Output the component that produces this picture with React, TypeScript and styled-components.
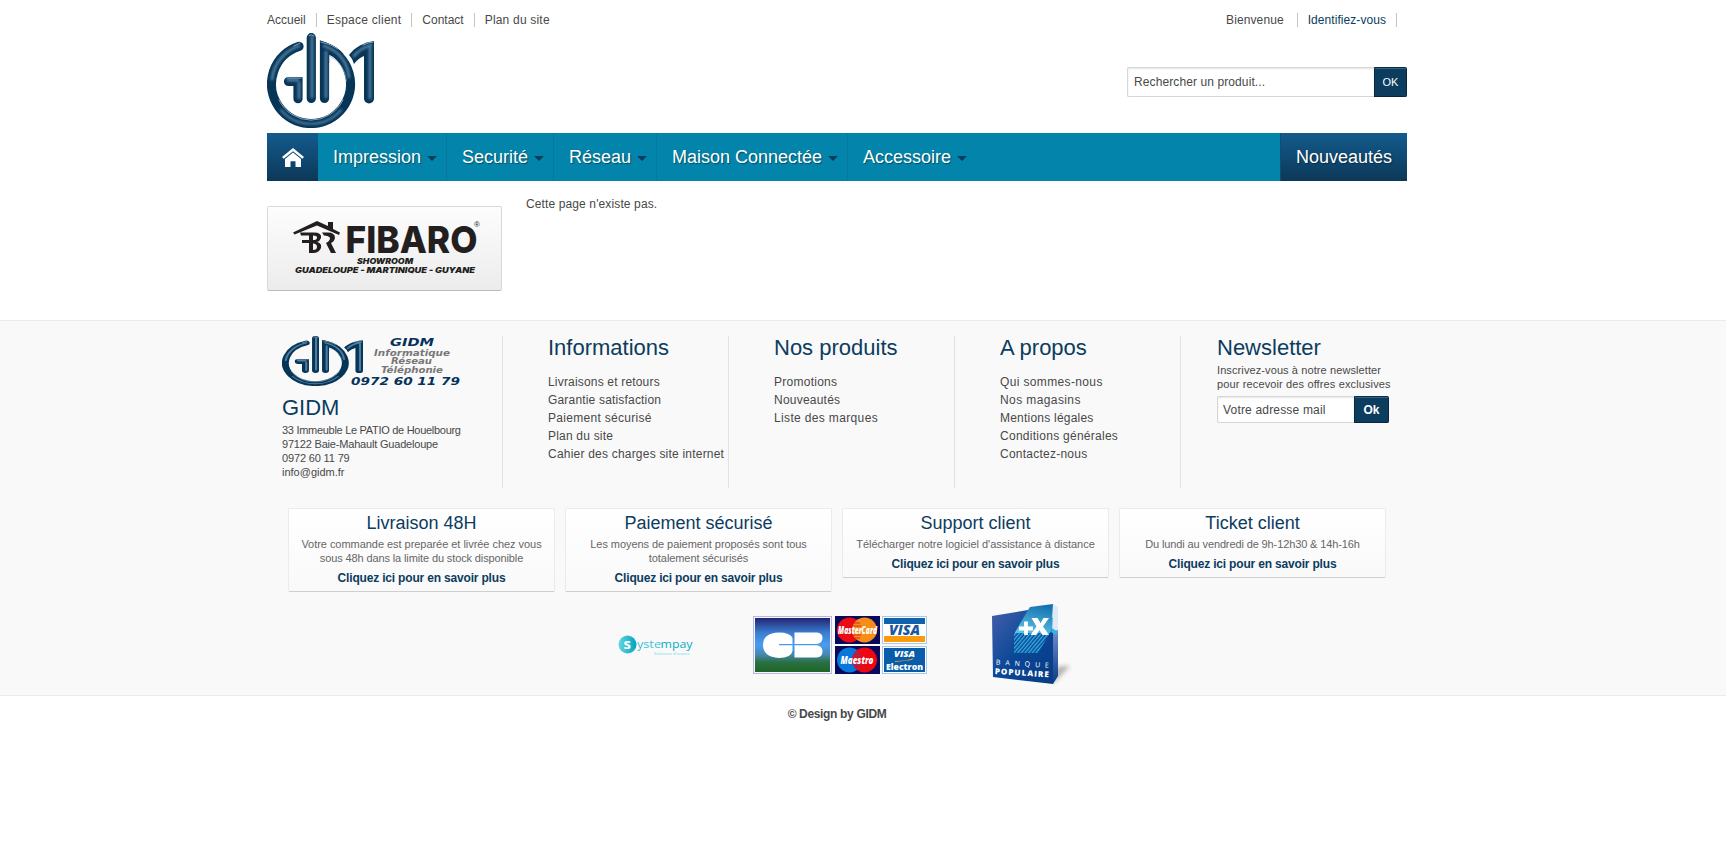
import React from "react";
import styled, { createGlobalStyle } from "styled-components";

const navy = "#0c3c5e";

const GlobalStyle = createGlobalStyle`
  * { box-sizing: border-box; }
  body {
    margin: 0;
    background: #fff;
    color: #484848;
    font: 12px/18px "Liberation Sans", Arial, sans-serif;
  }
  a { color: inherit; text-decoration: none; }
  ul, p, h2, h3 { margin: 0; padding: 0; list-style: none; font-weight: normal; }
  svg { display: block; }
`;

const Container = styled.div`
  width: 1140px;
  margin-left: 267px;
`;

const TopBar = styled.div`
  display: flex;
  justify-content: space-between;
  height: 33px;
  padding-top: 13px;
`;

const LinkStrip = styled.div`
  display: flex;
  align-items: flex-start;
`;

const StripLink = styled.a<{ $first?: boolean; $last?: boolean; $accent?: boolean; $gap?: number; $track?: number }>`
  height: 14px;
  line-height: 14px;
  padding-left: ${(p) => (p.$first ? 0 : 10)}px;
  padding-right: ${(p) => p.$gap ?? 10}px;
  border-right: ${(p) => (p.$last ? "0" : "1px solid #c4c4c4")};
  color: ${(p) => (p.$accent ? navy : "inherit")};
  letter-spacing: ${(p) => p.$track ?? 0}px;
`;

const AccountStrip = styled(LinkStrip)`
  padding-right: 10px;
`;

const Masthead = styled.header`
  display: flex;
  justify-content: space-between;
  height: 100px;
`;

const SearchForm = styled.form`
  display: flex;
  height: 30px;
  margin-top: 34px;
`;

const Field = styled.input<{ $width: number; $indent: number; $track: number }>`
  width: ${(p) => p.$width}px;
  padding: 0 0 0 ${(p) => p.$indent}px;
  border: 1px solid #d6d6d6;
  border-right: 0;
  border-radius: 2px 0 0 2px;
  background: #fff;
  box-shadow: inset 0 1px 2px #e6e6e6;
  font: 12px "Liberation Sans", Arial, sans-serif;
  letter-spacing: ${(p) => p.$track}px;
  &::placeholder { color: #484848; opacity: 1; }
`;

const SubmitButton = styled.button<{ $width: number; $bold?: boolean }>`
  width: ${(p) => p.$width}px;
  padding: 0;
  border: 1px solid #07273e;
  border-top-color: #0a2c45;
  border-radius: 0 2px 2px 0;
  background: ${navy};
  box-shadow: inset 0 1px 0 #3a627e;
  color: #fff;
  font: ${(p) => (p.$bold ? "bold 12px" : "11px")} "Liberation Sans", Arial, sans-serif;
`;

const MainNav = styled.nav`
  display: flex;
  height: 48px;
  background: #0384ab;
  color: #fff;
  font-size: 18px;
  line-height: 48px;
  text-shadow: 1px 1px 1px rgba(0, 0, 0, 0.4);
`;

const HomeLink = styled.a`
  display: flex;
  justify-content: center;
  width: 51px;
  padding: 15px 0 0 1px;
  background: linear-gradient(#135b8d, #0c3858);
`;

const NavItem = styled.a<{ $width: number; $last?: boolean }>`
  display: flex;
  align-items: center;
  width: ${(p) => p.$width}px;
  padding-left: 15px;
  border-right: ${(p) => (p.$last ? "0" : "1px solid #04799d")};
  &::after {
    content: "";
    margin: 2px 0 0 6px;
    border: 5px solid transparent;
    border-bottom: 0;
    border-top-color: ${navy};
  }
`;

const NewsLink = styled.a`
  width: 127px;
  margin-left: auto;
  text-align: center;
  background: linear-gradient(#135b8d, #0c3858);
  border-left: 1px solid #0b4f78;
`;

const Content = styled.main`
  display: flex;
  height: 139px;
`;

const ShowroomCard = styled.aside`
  width: 235px;
  height: 85px;
  margin: 25px 24px 0 0;
  border: 1px solid #d8d8d8;
  border-bottom-color: #bbb;
  border-radius: 2px;
  background: linear-gradient(#fdfdfd, #ececec);
`;

const Message = styled.p`
  padding-top: 14px;
  letter-spacing: 0.12px;
`;

const Footer = styled.footer`
  height: 376px;
  background: #f9f9f9;
  border-top: 1px solid #ebebeb;
  border-bottom: 1px solid #ebebeb;
`;

const FooterColumns = styled.div`
  display: flex;
  padding-top: 15px;
`;

const FooterColumn = styled.section<{ $width: number; $indent: number; $last?: boolean }>`
  width: ${(p) => p.$width}px;
  height: 152px;
  padding-left: ${(p) => p.$indent}px;
  border-right: ${(p) => (p.$last ? "0" : "1px solid #e2e2e2")};
  white-space: nowrap;
`;

const ColumnTitle = styled.h2`
  color: ${navy};
  font-size: 22px;
  line-height: 24px;
`;

const LinkList = styled.ul`
  padding-top: 13px;
`;

const LinkListItem = styled.li<{ $track: number }>`
  letter-spacing: ${(p) => p.$track}px;
`;

const SmallText = styled.p<{ $track?: number }>`
  font-size: 11px;
  line-height: 14px;
  letter-spacing: ${(p) => p.$track ?? 0}px;
`;

const TextGroup = styled.div`
  padding-top: 3px;
`;

const CompanyTitle = styled(ColumnTitle)`
  padding-top: 9px;
`;

const NewsletterForm = styled.form`
  display: flex;
  height: 27px;
  margin-top: 5px;
`;

const Services = styled.div`
  display: flex;
  align-items: flex-start;
  gap: 10px;
  padding: 20px 21px 0;
  height: 115px;
`;

const ServiceCard = styled.article`
  width: 267px;
  padding: 4px 6px 4px;
  border: 1px solid #ebebeb;
  border-bottom-color: #cfcfcf;
  border-radius: 2px;
  background: linear-gradient(#fff, #f9f9f9);
  text-align: center;
`;

const ServiceTitle = styled.h3`
  margin-bottom: 4px;
  color: ${navy};
  font-size: 18px;
  line-height: 20px;
`;

const ServiceText = styled(SmallText)`
  color: #666;
`;

const ServiceLink = styled.a`
  display: block;
  margin-top: 4px;
  color: ${navy};
  font-weight: bold;
  line-height: 18px;
  letter-spacing: -0.18px;
`;

const Payments = styled.div`
  display: flex;
  align-items: flex-start;
  padding-left: 351px;
`;

const PaymentMark = styled.div<{ $top: number; $left?: number }>`
  margin: ${(p) => p.$top}px 0 0 ${(p) => p.$left ?? 0}px;
`;

const Credit = styled.div`
  padding-top: 9px;
  text-align: center;
  font-weight: bold;
  letter-spacing: -0.34px;
`;

function GidmMark({ id }: { id: string }) {
  return (
    <>
      <defs>
        <filter id={`${id}-soft`} x="-10%" y="-10%" width="120%" height="120%">
          <feGaussianBlur stdDeviation="1" />
        </filter>
        <filter id={`${id}-edge`} x="-10%" y="-10%" width="120%" height="120%">
          <feGaussianBlur stdDeviation=".35" />
        </filter>
      </defs>
      <g fill="none" stroke="#073557" strokeWidth="9.200" strokeLinecap="round">
        <path d="M32 13.400A39.500 39.500 0 1 0 57.500 13.900V65.500" />
        <path d="M44.300 4.700V65.500M21.500 48.500H31V65.700" />
      </g>
      <path d="M53 8C62 9.500 71 14 76.500 21L70 27C67.500 24.500 66 23.300 62.200 22V30H53Z" fill="#073557" />
      <path d="M82 22C88 14 97 9.300 107 8V65.500a5 5 0 0 1-10 0V23C93.500 24.300 90 27 87 31Q86 26 82 22Z" fill="#073557" />
      <g fill="none" stroke="#4d7b9d" strokeWidth="2.800" strokeLinecap="round" filter={`url(#${id}-soft)`}>
        <path d="M32 13A39.500 39.500 0 0 0 5 46M45 4V64M32 50V65M59 19V64M21 47H31M57 13Q79 20 82 44M103 13V65M87 23Q93 15.500 104 12" />
        <path d="M14 77A39.500 39.500 0 0 0 74 77" strokeWidth="2" />
      </g>
      <g fill="none" stroke="#8db0c8" strokeWidth=".9" strokeLinecap="round" filter={`url(#${id}-edge)`}>
        <path d="M12 67A35.500 35.500 0 0 0 76 67M54 9Q64 11 71 16M27 13L33 10M42 2.500Q44 .8 47 3M20 45H34.500M96 12Q101 9.500 106 9" />
        <path d="M63 23Q78 31 79.500 48" strokeWidth=".7" />
      </g>
    </>
  );
}

function GidmLogo() {
  return (
    <svg width="107" height="95" viewBox="0 0 107 95" role="img" aria-label="GIDM">
      <GidmMark id="head" />
    </svg>
  );
}

function GidmBanner() {
  return (
    <svg width="180" height="51" viewBox="0 0 180 51" role="img" aria-label="GIDM Informatique">
      <svg width="81" height="50" viewBox="0 0 107 95" preserveAspectRatio="none">
        <GidmMark id="foot" />
      </svg>
      <g fontFamily="DejaVu Sans, sans-serif" fontWeight="bold" fontStyle="italic" fill="#04325a">
        <text x="108" y="10" fontSize="10.500" textLength="44" lengthAdjust="spacingAndGlyphs">GIDM</text>
        <text x="69" y="49" fontSize="10.500" textLength="109" lengthAdjust="spacingAndGlyphs">0972 60 11 79</text>
        <g fill="#777" fontSize="8">
          <text x="92" y="19.500" textLength="76" lengthAdjust="spacingAndGlyphs">Informatique</text>
          <text x="109" y="28" textLength="41" lengthAdjust="spacingAndGlyphs">Réseau</text>
          <text x="99" y="37" textLength="62" lengthAdjust="spacingAndGlyphs">Téléphonie</text>
        </g>
      </g>
    </svg>
  );
}

function HomeIcon() {
  return (
    <svg width="22" height="19" viewBox="0 0 22 20" preserveAspectRatio="none" fill="#fff">
      <path d="M11 0L22 9.500L20.300 11.300L11 3.300L1.700 11.300L0 9.500Z" />
      <path d="M11 4.800L19 11.600V20H13.500V14H8.500V20H3V11.600Z" />
    </svg>
  );
}

function FibaroLogo() {
  return (
    <svg width="233" height="83" viewBox="0 0 233 83" fill="#231f20">
      <path d="M25 25.500L49 14L60 19V15H65V22L72 25.500L71 28L49 18.500L26.500 27.500Z" />
      <path d="M32 25.500H46Q54 25.500 53 31Q52 34 49 35Q54 36 53 41Q51 46 45 46H41V36H34V33H41V28.500H33ZM45 28.500V33Q49 33 49 30.700Q49 28.500 45 28.500ZM45 36.500V43Q49 43 49 40Q49 36.500 45 36.500Z" fillRule="evenodd" />
      <path d="M54 25.500H60Q67 25.500 67 31Q66 35 63 36L68 46H63L58 36Q62 34 62 31Q61 28.500 56 28.500Z" />
      <text x="77.500" y="46" fontFamily="Inter, sans-serif" fontWeight="800" fontSize="37.500" textLength="132" lengthAdjust="spacingAndGlyphs">FIBARO</text>
      <text x="206" y="20" fontFamily="Liberation Sans, Arial" fontSize="8">®</text>
      <g fontFamily="Inter, sans-serif" fontWeight="900" fontStyle="italic" fontSize="7.800">
        <text x="89" y="56.500" textLength="56" lengthAdjust="spacingAndGlyphs">SHOWROOM</text>
        <text x="27" y="66" textLength="180" lengthAdjust="spacingAndGlyphs">GUADELOUPE - MARTINIQUE - GUYANE</text>
      </g>
    </svg>
  );
}

function SystempayLogo() {
  return (
    <svg width="76" height="22" viewBox="0 0 76 22" fontFamily="Open Sans, sans-serif">
      <defs>
        <linearGradient id="aqua" x2="1"><stop stopColor="#65d5e1" /><stop offset="1" stopColor="#00a3bd" /></linearGradient>
      </defs>
      <circle cx="9.500" cy="9.500" r="9" fill="url(#aqua)" />
      <text x="5.500" y="14" fontSize="15" fill="#fff" fontWeight="700">s</text>
      <g fontSize="11" fill="#3cc4d6">
        <text x="19" y="12.500" textLength="24" lengthAdjust="spacingAndGlyphs">yste</text>
        <text x="42.500" y="12.500" textLength="32" lengthAdjust="spacingAndGlyphs" fill="#08abc8">mpay</text>
      </g>
      <text x="36" y="19.500" fontSize="4" fill="#6fd3e0" textLength="36">Solutions d'avance</text>
    </svg>
  );
}

function CardBrands() {
  return (
    <svg width="175" height="58" viewBox="0 0 175 58" fontFamily="Open Sans, sans-serif" fontWeight="800">
      <defs>
        <linearGradient id="cb" x2="0" y2="1">
          <stop stopColor="#232475" /><stop offset=".28" stopColor="#3b80d0" /><stop offset=".5" stopColor="#4a9cf0" />
          <stop offset=".68" stopColor="#4388b0" /><stop offset=".82" stopColor="#2b7042" /><stop offset="1" stopColor="#1d6526" />
        </linearGradient>
      </defs>
      <rect x=".5" y=".5" width="78" height="57" fill="#f7f5fc" stroke="#bcb7dc" />
      <rect x="2" y="2" width="75" height="54" fill="url(#cb)" />
      <path d="M39.500 22Q37 16.500 26 16.500Q10 17 10 29Q10 41 26 42Q38 42 39.500 35V29.200H26V28H39.500Z" fill="#fff" />
      <path d="M41.500 16.500H64Q69.500 17 69.500 22Q69.500 27 64 28H41.500ZM41.500 29.200H64Q69.500 30 69.500 35.500Q69.500 41 64 41.500H41.500Z" fill="#fff" />
      <rect x="82" width="45" height="28" fill="#080b5c" />
      <circle cx="96.500" cy="14" r="12.500" fill="#eb0b12" /><circle cx="111.500" cy="14" r="12.500" fill="#f78c16" />
      <path d="M101 7H107M100 10H108M100 19H108M102 22H107" stroke="#c93420" />
      <text x="85" y="18" fontSize="10.500" fontStyle="italic" fill="#fff" textLength="39" lengthAdjust="spacingAndGlyphs">MasterCard</text>
      <rect x="82" y="30" width="45" height="28" fill="#080b5c" />
      <circle cx="96.500" cy="44" r="12.500" fill="#0877dc" /><circle cx="111.500" cy="44" r="12.500" fill="#ed0712" />
      <path d="M101 37H107M100 40H108M100 49H108M102 52H107" stroke="#5547a0" />
      <text x="87.500" y="48" fontSize="10.500" fontStyle="italic" fill="#fff" textLength="33" lengthAdjust="spacingAndGlyphs">Maestro</text>
      <rect x="129.500" y=".5" width="44" height="27" fill="#fff" stroke="#a5c8ed" />
      <path d="M131 2H172V8H131Z" fill="#1161ac" /><path d="M131 20H172V26H131Z" fill="#f99b0c" />
      <text x="136" y="19" fontSize="14" fontStyle="italic" fill="#17589e" textLength="31" lengthAdjust="spacingAndGlyphs">VISA</text>
      <rect x="129.500" y="30.500" width="44" height="27" fill="#fff" stroke="#a5c8ed" />
      <rect x="131" y="32" width="41" height="24" fill="#095ca9" />
      <text x="141" y="41" fontSize="9.500" fontStyle="italic" fill="#fff" textLength="21" lengthAdjust="spacingAndGlyphs">VISA</text>
      <path d="M142 45Q154 45 161 42Q159 45 154 44.500Q149 45 142 46Z" fill="#e8a22e" />
      <text x="133" y="54" fontSize="9" fill="#fff" textLength="37" lengthAdjust="spacingAndGlyphs">Electron</text>
    </svg>
  );
}

function BanquePopulaireLogo() {
  return (
    <svg width="80" height="84" viewBox="0 0 80 84" fontFamily="Open Sans, sans-serif">
      <defs>
        <linearGradient id="bank" x1="0" y1="0" x2="1" y2="1"><stop stopColor="#435fab" /><stop offset=".5" stopColor="#0a4797" /><stop offset="1" stopColor="#073b85" /></linearGradient>
        <linearGradient id="fold" x1=".7" y1="0" x2=".4" y2="1"><stop stopColor="#1470ae" /><stop offset="1" stopColor="#5cc3e6" /></linearGradient>
        <linearGradient id="side" x2="0" y2="1"><stop stopColor="#dfe9f6" /><stop offset=".35" stopColor="#6684c6" /><stop offset="1" stopColor="#073b85" /></linearGradient>
        <pattern id="hatch" width="2.800" height="2.800" patternUnits="userSpaceOnUse" patternTransform="rotate(40)"><path d="M0 0V3" stroke="#39afe4" strokeWidth="2.600" /></pattern>
        <filter id="shade" x="-30%" y="-30%" width="160%" height="160%"><feGaussianBlur stdDeviation="2" /></filter>
      </defs>
      <path d="M61 80L78 62L68 62L60 67Z" fill="#888" opacity=".6" filter="url(#shade)" />
      <path d="M60 14L66 6V72L61 80Z" fill="url(#side)" />
      <path d="M0 12L36 6L61 14V80L1 73Z" fill="url(#bank)" />
      <path d="M38 3L61 0L60 25L58 29H22V30L36 6Z" fill="url(#fold)" />
      <path d="M22 29H58L46 49H22Z" fill="#064994" />
      <path d="M22 29H58L46 49H22Z" fill="url(#hatch)" />
      <path d="M61 0L66 3V26L60 27Z" fill="#dcebf6" />
      <path d="M60 24L66 28L64 31L59 28Z" fill="#31b5e7" />
      <path d="M27 24.500H41M34 17.500V31" stroke="#fff" strokeWidth="3.800" />
      <path d="M39.500 14H45.500L48.500 19L51.500 14H57L51 22.500L57 31H50.500L47.500 26L44 31H38.500L44.500 22.500Z" fill="#fff" />
      <g fill="#fff" transform="rotate(3.500 3 66)">
        <text x="3.500" y="60.500" fontSize="7" textLength="53">BANQUE</text>
        <text x="3" y="70" fontSize="8" fontWeight="800" textLength="54">POPULAIRE</text>
      </g>
    </svg>
  );
}

const menu = [
  { label: "Impression", width: 129 },
  { label: "Securité", width: 107 },
  { label: "Réseau", width: 103 },
  { label: "Maison Connectée", width: 191 },
  { label: "Accessoire", width: 124 },
];

const columns = [
  {
    title: "Informations",
    links: [
      { label: "Livraisons et retours", track: 0.18 },
      { label: "Garantie satisfaction", track: 0.18 },
      { label: "Paiement sécurisé", track: 0.3 },
      { label: "Plan du site", track: 0.2 },
      { label: "Cahier des charges site internet", track: 0.21 },
    ],
  },
  {
    title: "Nos produits",
    links: [
      { label: "Promotions", track: 0.26 },
      { label: "Nouveautés", track: 0.22 },
      { label: "Liste des marques", track: 0.35 },
    ],
  },
  {
    title: "A propos",
    links: [
      { label: "Qui sommes-nous", track: 0.36 },
      { label: "Nos magasins", track: 0.4 },
      { label: "Mentions légales", track: 0.22 },
      { label: "Conditions générales", track: 0.27 },
      { label: "Contactez-nous", track: 0.24 },
    ],
  },
];

const address = [
  { text: "33 Immeuble Le PATIO de Houelbourg", track: -0.29 },
  { text: "97122 Baie-Mahault Guadeloupe", track: -0.19 },
  { text: "0972 60 11 79", track: -0.15 },
  { text: "info@gidm.fr", track: 0 },
];

const services = [
  {
    title: "Livraison 48H",
    lines: [
      { text: "Votre commande est preparée et livrée chez vous", track: -0.04 },
      { text: "sous 48h dans la limite du stock disponible", track: -0.12 },
    ],
  },
  {
    title: "Paiement sécurisé",
    lines: [
      { text: "Les moyens de paiement proposés sont tous", track: -0.06 },
      { text: "totalement sécurisés", track: -0.08 },
    ],
  },
  { title: "Support client", lines: [{ text: "Télécharger notre logiciel d'assistance à distance", track: -0.03 }] },
  { title: "Ticket client", lines: [{ text: "Du lundi au vendredi de 9h-12h30 & 14h-16h", track: -0.12 }] },
];

export default function App() {
  return (
    <>
      <GlobalStyle />
      <Container>
        <TopBar>
          <LinkStrip>
            <StripLink href="#" $first>Accueil</StripLink>
            <StripLink href="#" $track={0.25}>Espace client</StripLink>
            <StripLink href="#">Contact</StripLink>
            <StripLink href="#" $last $track={0.2}>Plan du site</StripLink>
          </LinkStrip>
          <AccountStrip>
            <StripLink as="span" $first $gap={13} $track={0.1}>Bienvenue</StripLink>
            <StripLink href="#" $accent $track={0.06}>Identifiez-vous</StripLink>
          </AccountStrip>
        </TopBar>
        <Masthead>
          <GidmLogo />
          <SearchForm>
            <Field $width={247} $indent={6} $track={0.1} placeholder="Rechercher un produit..." />
            <SubmitButton type="button" $width={33}>OK</SubmitButton>
          </SearchForm>
        </Masthead>
        <MainNav>
          <HomeLink href="#" aria-label="Accueil"><HomeIcon /></HomeLink>
          {menu.map((item, i) => (
            <NavItem key={item.label} href="#" $width={item.width} $last={i === menu.length - 1}>{item.label}</NavItem>
          ))}
          <NewsLink href="#">Nouveautés</NewsLink>
        </MainNav>
        <Content>
          <ShowroomCard><FibaroLogo /></ShowroomCard>
          <Message>Cette page n'existe pas.</Message>
        </Content>
      </Container>
      <Footer>
        <Container>
          <FooterColumns>
            <FooterColumn $width={236} $indent={15}>
              <GidmBanner />
              <CompanyTitle>GIDM</CompanyTitle>
              <TextGroup>
                {address.map((line) => <SmallText key={line.text} $track={line.track}>{line.text}</SmallText>)}
              </TextGroup>
            </FooterColumn>
            {columns.map((col) => (
              <FooterColumn key={col.title} $width={226} $indent={45}>
                <ColumnTitle>{col.title}</ColumnTitle>
                <LinkList>
                  {col.links.map((link) => (
                    <LinkListItem key={link.label} $track={link.track}><a href="#">{link.label}</a></LinkListItem>
                  ))}
                </LinkList>
              </FooterColumn>
            ))}
            <FooterColumn $width={226} $indent={36} $last>
              <ColumnTitle>Newsletter</ColumnTitle>
              <TextGroup>
                <SmallText $track={0.1}>Inscrivez-vous à notre newsletter</SmallText>
                <SmallText $track={0.13}>pour recevoir des offres exclusives</SmallText>
              </TextGroup>
              <NewsletterForm>
                <Field $width={137} $indent={5} $track={0.18} placeholder="Votre adresse mail" />
                <SubmitButton type="button" $width={35} $bold>Ok</SubmitButton>
              </NewsletterForm>
            </FooterColumn>
          </FooterColumns>
          <Services>
            {services.map((service) => (
              <ServiceCard key={service.title}>
                <ServiceTitle>{service.title}</ServiceTitle>
                {service.lines.map((line) => <ServiceText key={line.text} $track={line.track}>{line.text}</ServiceText>)}
                <ServiceLink href="#">Cliquez ici pour en savoir plus</ServiceLink>
              </ServiceCard>
            ))}
          </Services>
          <Payments>
            <PaymentMark $top={32}><SystempayLogo /></PaymentMark>
            <PaymentMark $top={13} $left={59}><CardBrands /></PaymentMark>
            <PaymentMark $top={1} $left={64}><BanquePopulaireLogo /></PaymentMark>
          </Payments>
        </Container>
      </Footer>
      <Container>
        <Credit>© Design by GIDM</Credit>
      </Container>
    </>
  );
}
